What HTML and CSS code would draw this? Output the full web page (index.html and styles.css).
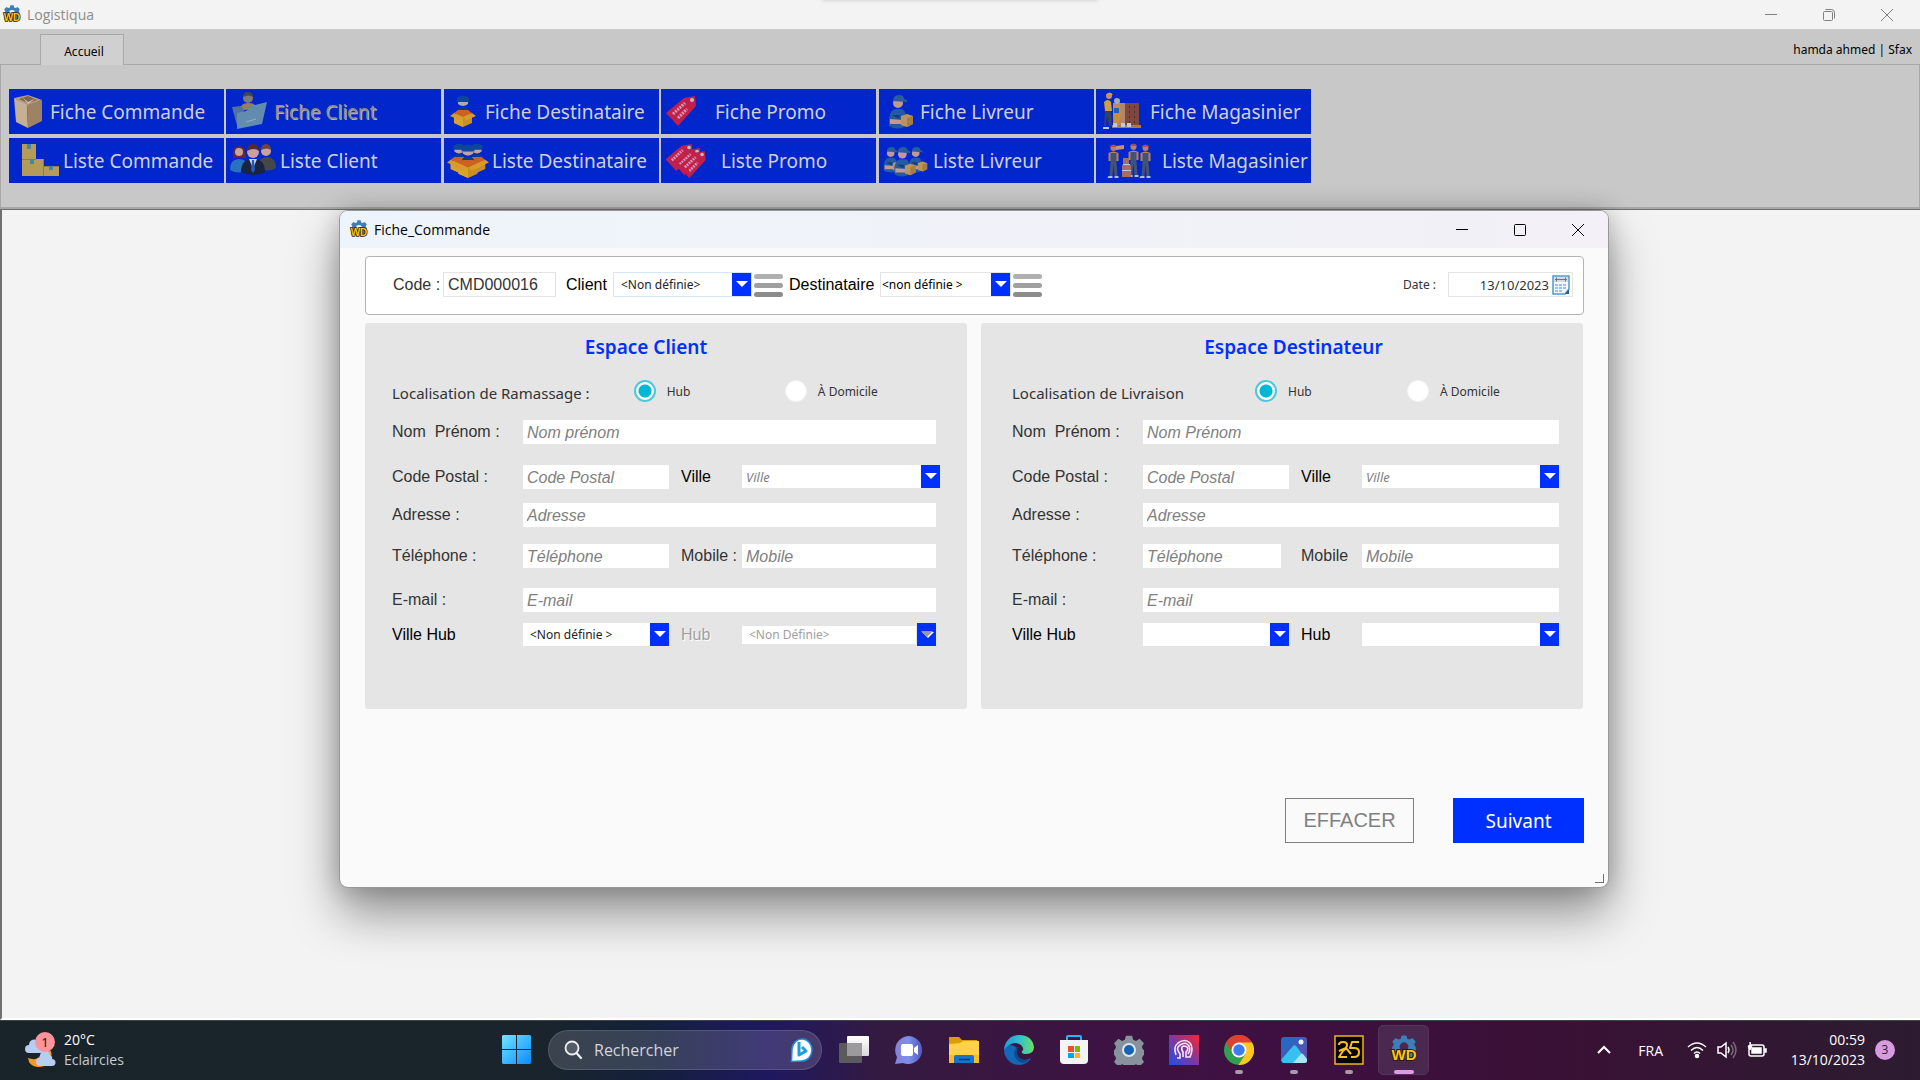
FILE: index.html
```html
<!DOCTYPE html>
<html lang="fr">
<head>
<meta charset="utf-8">
<title>Logistiqua</title>
<link rel="stylesheet" href="styles.css">
</head>
<body>
<svg class="defs" aria-hidden="true">
  <symbol id="gear" viewBox="-12 -12 24 24">
    <path fill-rule="evenodd" d="M-2.500-11.500h5l.8 3.200 2.300 1 2.900-1.700 3.500 3.500-1.700 2.900 1 2.300 3.200.8v3l-3.200.9-1 2.300 1.700 2.900-3.500 3.500-2.900-1.700-2.300 1-.8 3.200h-5l-.8-3.200-2.300-1-2.900 1.700-3.500-3.500 1.700-2.900-1-2.300-3.200-.9v-3l3.200-.8 1-2.300-1.700-2.900 3.500-3.500 2.900 1.700 2.300-1zM0-4.500a4.500 4.500 0 1 0 0 9 4.500 4.500 0 1 0 0-9z"/>
  </symbol>
  <symbol id="wd" viewBox="0 0 28 28">
    <use href="#gear" x="3" y="0" width="22" height="22" fill="#3f7fb8"/>
    <text x="14" y="23" text-anchor="middle" font-family="Liberation Sans" font-weight="700" font-size="14" fill="#ffc412" stroke="#2a1a10" stroke-width="2" paint-order="stroke">WD</text>
  </symbol>
  <symbol id="courier" viewBox="0 0 26 34">
    <path fill="#2660a0" d="M1 31q-1-15 6-17h7q4 2 4 8v9q-9 5-17 0z"/>
    <circle cx="10" cy="8" r="5" fill="#d9a58c"/>
    <path fill="#2f6494" d="M5 6q0-6 6-6 5 0 5 4l3 1v2z"/>
    <path fill="#17406e" d="M10 15v10M4 20h8l-1 4z"/>
    <path fill="#d9a58c" d="M2 24l13 1v4L2 29z"/>
    <path fill="#d0a050" d="M13 21l6-2 6 2v8l-6 3-6-2z"/>
    <path fill="#b8863a" d="M19 23l6-2v8l-6 3z"/>
  </symbol>
  <symbol id="receiver" viewBox="0 0 26 32">
    <path fill="#0e4c92" d="M7 3q6-5 12 0v4H7z"/>
    <path fill="#d8b0a0" d="M8 7h10v2q-5 4-10 0z"/>
    <path fill="#11407c" d="M7 17q0-5 6-5t6 5z"/>
    <path fill="#e09a18" d="M4 19h18v9l-9 4-9-4z"/>
    <path fill="#f0b020" d="M4 19l9 4v9l-9-4z"/>
    <path fill="#e06a10" d="M4 18l4-3h10l4 3-9 4z"/>
    <path fill="#f0a818" d="M4 18l9 4-4 3-9-4zM22 18l-9 4 4 3 9-4z"/>
  </symbol>
  <symbol id="tag" viewBox="0 0 34 32">
    <path fill="#d8203c" d="M1 18L19 3l11-2 1 10L13 31z"/>
    <circle cx="27" cy="5" r="2" fill="#c8d0c8"/>
    <path stroke="#e8a8b8" stroke-width="3" stroke-dasharray="2 1" fill="none" d="M8 19L20 8M13 23l9-9"/>
  </symbol>
  <symbol id="worker" viewBox="0 0 14 34">
    <circle cx="7" cy="4" r="3" fill="#c98a6a"/>
    <path fill="#c8503c" d="M3 3q4-5 8 0z"/>
    <path fill="#d08a50" d="M2 9q5-3 10 0v8H2z"/>
    <path fill="#4c5670" d="M4 9h6v9l1 14H8L7 20 6 32H3l1-14z"/>
    <path fill="#c8ccd4" d="M2 32h4v2H1zM8 32h4v2H8z"/>
  </symbol>
  <symbol id="burger" viewBox="0 0 29 24">
    <rect width="29" height="5" rx="2.500" y="1" fill="#b0b0b0"/>
    <rect width="29" height="5" rx="2.500" y="10" fill="#a0a0a0"/>
    <rect width="29" height="5" rx="2.500" y="19" fill="#8c8c8c"/>
  </symbol>
</svg>

<header class="app-title">
  <svg class="logo" viewBox="0 0 28 28"><use href="#wd"/></svg>
  <h1>Logistiqua</h1>
  <div class="notch"></div>
  <div class="win-controls">
    <button aria-label="Réduire"><svg viewBox="0 0 12 12"><path d="M0 5.500h12"/></svg></button>
    <button aria-label="Restaurer"><svg viewBox="0 0 12 12"><rect x=".5" y="2.500" width="9" height="9" rx="1"/><path d="M2.500.5h6a3 3 0 0 1 3 3v6"/></svg></button>
    <button aria-label="Fermer"><svg viewBox="0 0 12 12"><path d="M0 0l12 12M12 0L0 12"/></svg></button>
  </div>
</header>

<nav class="tabs">
  <button class="tab">Accueil</button>
  <span class="user">hamda ahmed | Sfax</span>
</nav>

<section class="ribbon">
  <div class="ribbon-grid">
    <button class="rb"><svg class="slot-s" viewBox="0 0 41 45"><path fill="#c8a878" d="M5 9l14-3 14 5-15 6z"/><path fill="#dcc090" d="M5 9l13 7 1 23L7 33z"/><path fill="#b08c58" d="M18 16l15-5v21l-14 7z"/><path fill="#8c6c40" d="M10 10l9-3 9 4-9 3z"/><path fill="#e4d0a8" d="M13 8l6 5 8-4-8 6z"/></svg><span>Fiche Commande</span></button>
    <button class="rb" disabled><svg class="slot-m" viewBox="0 0 48 45"><circle cx="22" cy="9" r="5" fill="#8c8078"/><path fill="#504840" d="M17 8q0-5 5-5t5 5q-4-3-10 0z"/><path fill="#a08a50" d="M14 22q0-8 8-8t8 5z"/><path fill="#587c98" d="M6 18l9-1 3 4-6 19z"/><path fill="#6c98ac" d="M11 24l9-2 5-5 16-4-5 22-25 5z"/><path fill="none" stroke="#a8c0cc" d="M20 33l10-3"/></svg><span>Fiche Client</span></button>
    <button class="rb"><svg class="slot-s" viewBox="0 0 41 45"><use href="#receiver" x="6" y="6" width="26" height="32"/></svg><span>Fiche Destinataire</span></button>
    <button class="rb"><svg class="slot-l" viewBox="0 0 54 45"><use href="#tag" x="4" y="6" width="34" height="32"/></svg><span>Fiche Promo</span></button>
    <button class="rb"><svg class="slot-s" viewBox="0 0 41 45"><use href="#courier" x="9" y="6" width="26" height="34"/></svg><span>Fiche Livreur</span></button>
    <button class="rb"><svg class="slot-l" viewBox="0 0 54 45"><path fill="#c8905c" d="M17 14h12v24H17z"/><path fill="#8c4c30" d="M29 14h14v24H29z"/><path stroke="#5c2c20" stroke-dasharray="2 3" d="M33.500 17v18M38.500 17v18"/><path fill="#c88030" d="M16 36h29v3H16z"/><circle cx="13" cy="7" r="3" fill="#d89870"/><path fill="#e0b030" d="M10 6q4-5 7 0zM8 13q4-4 7 0l1 9H9z"/><path fill="#38445c" d="M9 22h6l1 15h-3l-2-10-1 10H8z"/><circle cx="21" cy="12" r="3" fill="#b8b8c0"/><path fill="#e09830" d="M17 16h7l1 9-3 13h-4z"/><path fill="#2468a8" d="M18 19h5v5h-5z"/><path fill="#d8dce0" d="M7 38h6v2H7zM17 34h4v4h-4zM25 34h4v4h-4zM31 34h4v4h-4z"/></svg><span>Fiche Magasinier</span></button>

    <button class="rb"><svg class="slot-l" viewBox="0 0 54 45"><path fill="#c8a850" d="M13 6h14v15h7v7h16v10H13z"/><path stroke="#a88438" fill="none" d="M13 21.500h14M34.500 21v17M34 28.500h16"/><path fill="#4c90a8" d="M18 6h4v5h-4zM21 21h4v5h-4zM40 28h4v4h-4z"/></svg><span>Liste Commande</span></button>
    <button class="rb"><svg class="slot-l" viewBox="0 0 54 45"><path fill="#6c2c20" d="M7 20Q6 8 13 8t7 12z"/><circle cx="13" cy="14" r="4" fill="#e0b098"/><path fill="#2c7cc0" d="M4 32q0-11 9-11t8 11q-8 5-17 0z"/><circle cx="40" cy="13" r="5" fill="#e0b098"/><path fill="#7c4830" d="M35 12q0-6 5-6t5 6q-4-3-10 0z"/><path fill="#4c4c3c" d="M32 30q0-11 9-11t9 11q-8 5-18 0z"/><circle cx="27" cy="14" r="6" fill="#e0b098"/><path fill="#5c2c24" d="M21 13q0-7 6-7t6 7q-5-4-12 0z"/><path fill="#1c2434" d="M15 34q0-13 12-13t12 13q-10 6-24 0z"/><path fill="#e0e4e8" d="M23 21h8l-4 10z"/><path fill="#2c60b0" d="M26 22h2l1 10-2 3-2-3z"/></svg><span>Liste Client</span></button>
    <button class="rb"><svg class="slot-m" viewBox="0 0 48 45"><use href="#receiver" x="3" y="5" width="24" height="30"/><use href="#receiver" x="21" y="5" width="24" height="30"/><use href="#receiver" x="10" y="6" width="28" height="34"/></svg><span>Liste Destinataire</span></button>
    <button class="rb"><svg class="slot-xl" viewBox="0 0 60 45"><use href="#tag" x="3" y="5" width="32" height="29"/><use href="#tag" x="11" y="9" width="32" height="29"/><use href="#tag" x="16" y="12" width="32" height="29"/></svg><span>Liste Promo</span></button>
    <button class="rb"><svg class="slot-l" viewBox="0 0 54 45"><use href="#courier" x="4" y="9" width="20" height="26"/><use href="#courier" x="28" y="9" width="22" height="26"/><use href="#courier" x="14" y="9" width="24" height="30"/></svg><span>Liste Livreur</span></button>
    <button class="rb"><svg class="slot-xxl" viewBox="0 0 66 45"><use href="#worker" x="10" y="6" width="15" height="34"/><use href="#worker" x="30" y="5" width="15" height="34"/><use href="#worker" x="42" y="6" width="15" height="34"/><path fill="#d8a078" d="M20 8l8-1v4l-8 1z"/><path fill="#b87858" d="M27 20h6v7h2v12h-9V27h1z"/><path stroke="#d8dce0" d="M27 26.500h7M26 32.500h9"/></svg><span>Liste Magasinier</span></button>
  </div>
</section>

<main class="workspace">
  <section class="dialog" aria-labelledby="dlg-title">
    <header class="dlg-title">
      <svg class="logo" viewBox="0 0 28 28"><use href="#wd"/></svg>
      <h2 id="dlg-title">Fiche_Commande</h2>
      <div class="win-controls">
        <button aria-label="Réduire"><svg viewBox="0 0 12 12"><path d="M0 5.500h12"/></svg></button>
        <button aria-label="Agrandir"><svg viewBox="0 0 12 12"><rect x=".5" y=".5" width="11" height="11" rx="1"/></svg></button>
        <button aria-label="Fermer"><svg viewBox="0 0 12 12"><path d="M0 0l12 12M12 0L0 12"/></svg></button>
      </div>
    </header>
    <form class="dlg-body">
      <div class="order-bar">
        <label class="soft w-code" for="code">Code :</label>
        <input class="field boxed w-codefield" id="code" type="text" value="CMD000016">
        <label class="w-client" for="client">Client</label>
        <select class="combo boxed active" id="client"><option>&lt;Non définie&gt;</option></select>
        <button class="burger" type="button" aria-label="Liste des clients"><svg viewBox="0 0 29 24"><use href="#burger"/></svg></button>
        <label class="w-dest" for="dest">Destinataire</label>
        <select class="combo boxed tight" id="dest"><option>&lt;non définie &gt;</option></select>
        <button class="burger" type="button" aria-label="Liste des destinataires"><svg viewBox="0 0 29 24"><use href="#burger"/></svg></button>
        <label class="date-label" for="date">Date :</label>
        <div class="date-box">
          <input id="date" type="text" value="13/10/2023">
          <svg viewBox="0 0 18 20"><path fill="#f4f8fc" stroke="#4f98cc" stroke-width="1.500" d="M1 1h16v13l-4 5H1z"/><path fill="#d4dae0" d="M2 2h14v5H2z"/><path stroke="#707880" d="M3 4.500h12M4.500 2.500v4M13.500 2.500v4"/><path stroke="#9cc0f0" stroke-width="2" stroke-dasharray="3 1" d="M3 10h12M3 13h12M3 16h8"/><path fill="#2c5c94" d="M17 14v5h-4z"/></svg>
        </div>
      </div>

      <div class="panels">
        <fieldset class="panel panel-client">
          <h3>Espace Client</h3>
          <div class="place">
            <span class="place-label">Localisation de Ramassage :</span>
            <label><input type="radio" name="ramassage" checked>Hub</label>
            <label><input type="radio" name="ramassage">À Domicile</label>
          </div>
          <div class="form-grid">
            <label class="soft" for="c-nom">Nom  Prénom :</label>
            <input class="field wide" id="c-nom" type="text" placeholder="Nom prénom">
            <label class="soft" for="c-cp">Code Postal :</label>
            <input class="field" id="c-cp" type="text" placeholder="Code Postal">
            <label class="second" for="c-ville">Ville</label>
            <select class="combo hint stretch" id="c-ville"><option>Ville</option></select>
            <label class="soft" for="c-adr">Adresse :</label>
            <input class="field wide" id="c-adr" type="text" placeholder="Adresse">
            <label class="soft" for="c-tel">Téléphone :</label>
            <input class="field" id="c-tel" type="text" placeholder="Téléphone">
            <label class="soft second" for="c-mob">Mobile :</label>
            <input class="field" id="c-mob" type="text" placeholder="Mobile">
            <label class="soft" for="c-mail">E-mail :</label>
            <input class="field wide" id="c-mail" type="text" placeholder="E-mail">
            <label for="c-vhub">Ville Hub</label>
            <select class="combo" id="c-vhub"><option>&lt;Non définie &gt;</option></select>
            <label class="second off" for="c-hub">Hub</label>
            <select class="combo" id="c-hub" disabled><option>&lt;Non Définie&gt;</option></select>
          </div>
        </fieldset>

        <fieldset class="panel panel-dest">
          <h3>Espace Destinateur</h3>
          <div class="place">
            <span class="place-label">Localisation de Livraison</span>
            <label><input type="radio" name="livraison" checked>Hub</label>
            <label><input type="radio" name="livraison">À Domicile</label>
          </div>
          <div class="form-grid">
            <label class="soft" for="d-nom">Nom  Prénom :</label>
            <input class="field wide" id="d-nom" type="text" placeholder="Nom Prénom">
            <label class="soft" for="d-cp">Code Postal :</label>
            <input class="field" id="d-cp" type="text" placeholder="Code Postal">
            <label class="second" for="d-ville">Ville</label>
            <select class="combo hint" id="d-ville"><option>Ville</option></select>
            <label class="soft" for="d-adr">Adresse :</label>
            <input class="field wide" id="d-adr" type="text" placeholder="Adresse">
            <label class="soft" for="d-tel">Téléphone :</label>
            <input class="field short" id="d-tel" type="text" placeholder="Téléphone">
            <label class="soft second" for="d-mob">Mobile</label>
            <input class="field" id="d-mob" type="text" placeholder="Mobile">
            <label class="soft" for="d-mail">E-mail :</label>
            <input class="field wide" id="d-mail" type="text" placeholder="E-mail">
            <label for="d-vhub">Ville Hub</label>
            <select class="combo" id="d-vhub"><option></option></select>
            <label class="second" for="d-hub">Hub</label>
            <select class="combo" id="d-hub"><option></option></select>
          </div>
        </fieldset>
      </div>

      <div class="actions">
        <button class="btn-clear" type="reset">EFFACER</button>
        <button class="btn-next" type="button">Suivant</button>
      </div>
    </form>
    <span class="grip"></span>
  </section>
</main>

<footer class="taskbar">
  <div class="weather">
    <svg viewBox="0 0 36 40"><path fill="#f59a1c" d="M24 16q10 4 7 12-4 10-14 9-8-1-9-9 8 3 12-2 4-4 4-10z"/><path fill="#b8cdf2" d="M9 23a4 4 0 0 1 0-8 5 6 0 0 1 9-3q3 2 2 5a3 3 0 0 1 0 6z"/><path fill="#b8cdf2" d="M20 36a4 4 0 0 1 0-8 5 6 0 0 1 10-3q3 2 2 4a3 3 0 0 1 0 7z"/><circle cx="25" cy="12" r="10" fill="#fc949c"/><text x="25" y="17" text-anchor="middle" font-family="Noto Sans" font-size="13" fill="#201818">1</text></svg>
    <div><strong>20°C</strong><span>Eclaircies</span></div>
  </div>
  <div class="dock">
    <button class="app" aria-label="Démarrer"><svg viewBox="0 0 30 30"><defs><linearGradient id="win" x2="1" y2="1"><stop stop-color="#70e4ff"/><stop offset="1" stop-color="#0a8cff"/></linearGradient></defs><path fill="url(#win)" d="M1 0h13v14H0V1zM15 0h13l1 1v13H15zM0 15h14v14H1l-1-1zM15 15h14v13l-1 1H15z"/></svg></button>
    <label class="search">
      <svg viewBox="0 0 20 20"><circle cx="9" cy="8" r="6.500" fill="#ffffff22" stroke="#f0f0f4" stroke-width="1.800"/><path stroke="#f0f0f4" stroke-width="2.200" stroke-linecap="round" d="M13.500 13l4.500 5"/></svg>
      <input type="text" placeholder="Rechercher" aria-label="Rechercher">
      <svg class="bing" viewBox="0 0 24 26"><path fill="#fff" stroke="#1c8cdc" stroke-width="1.500" d="M1.500 24.500L2 12A10 11 0 1 1 12 24z"/><path fill="none" stroke="#1c9ce4" stroke-width="3" stroke-linejoin="round" d="M9 5v13l7-4-4-4"/></svg>
    </label>
    <button class="app" aria-label="Vue des tâches"><svg viewBox="0 0 30 30"><defs><linearGradient id="tv" y2="1" x2="0"><stop stop-color="#fff"/><stop offset="1" stop-color="#d8d8d8"/></linearGradient></defs><rect y="8" width="23" height="20" rx="1" fill="#5c5a5c"/><rect x="8" y="1" width="22" height="20" rx="1" fill="url(#tv)"/><path fill="#9c9a9c" d="M8 8h15v13H8z"/></svg></button>
    <button class="app" aria-label="Conversation"><svg viewBox="0 0 30 30"><defs><linearGradient id="ch" x2="1" y2="0"><stop stop-color="#8480dc"/><stop offset=".5" stop-color="#7c90e8"/><stop offset="1" stop-color="#5456c0"/></linearGradient></defs><path fill="url(#ch)" d="M15 1a14 14 0 1 1-6 27l-8 1 2-7A14 14 0 0 1 15 1z"/><rect x="7" y="9" width="12" height="12" rx="2" fill="#fff"/><path fill="#fff" d="M20 13l4-3v10l-4-3z"/></svg></button>
    <button class="app" aria-label="Explorateur"><svg viewBox="0 0 30 30"><path fill="#dc9c08" d="M0 2h10l3 3h15l1 4H0z"/><path fill="#ffd24a" d="M0 9l11-1 3-2h16v22H0z"/><path fill="#f8bc28" d="M0 20h30v8H0z"/><path fill="#1874c8" d="M5 28v-6q0-2 2-2h16q2 0 2 2v6z"/><path stroke="#0a3c70" stroke-width="1.500" d="M10 24.500h11"/></svg></button>
    <button class="app" aria-label="Edge"><svg viewBox="0 0 30 30"><defs><linearGradient id="ed" x2="1" y2="0"><stop stop-color="#1c9cd8"/><stop offset=".5" stop-color="#30c0d0"/><stop offset="1" stop-color="#6ce060"/></linearGradient></defs><path fill="#1468b8" d="M0 15a15 15 0 0 0 20 14q5-2 7-6-7 4-12 0-5-4-2-10Q6 6 0 15z"/><path fill="url(#ed)" d="M0 15A15 15 0 0 1 15 0q13 0 15 12 0 7-8 7-5 0-4-3 3-2-1-6Q9 4 0 15z"/><path fill="#0c4c94" d="M13 12q-6 7 0 13 6 6 12 0-8 1-11-4-2-4 0-9z"/></svg></button>
    <button class="app" aria-label="Microsoft Store"><svg viewBox="0 0 30 30"><path fill="none" stroke="#28b4f0" stroke-width="2" d="M8 6V2q0-1 1-1h12q1 0 1 1v4"/><path fill="#f4f4f4" d="M1 5h28v20q0 4-4 4H5q-4 0-4-4z"/><path fill="#f25022" d="M9 11h6v6H9z"/><path fill="#7fba00" d="M16 11h5v6h-5z"/><path fill="#00a4ef" d="M9 18h6v5H9z"/><path fill="#ffb900" d="M16 18h5v5h-5z"/></svg></button>
    <button class="app" aria-label="Paramètres"><svg viewBox="0 0 30 30"><use href="#gear" width="30" height="30" fill="#87929c"/><circle cx="15" cy="15" r="6" fill="#1464b4" stroke="#e0e6ec" stroke-width="2"/></svg></button>
    <button class="app" aria-label="Sécurité"><svg viewBox="0 0 30 30"><defs><linearGradient id="sc" x1="0" y1="1" x2="1" y2="0"><stop stop-color="#1c50e8"/><stop offset=".5" stop-color="#8038a0"/><stop offset="1" stop-color="#ff2428"/></linearGradient></defs><path fill="url(#sc)" d="M0 0h30v30H0z"/><path fill="none" stroke="#f8e8f8" stroke-width="1.600" d="M8 23h3v-4q-5-6 0-9 6-4 9 1 2 4-1 8M7 20q-3-8 2-12 7-5 12 0 4 5 0 14h-4v-5q3-3 1-5-3-2-5 0-1 2 1 5v5"/></svg></button>
    <button class="app run" aria-label="Chrome"><svg viewBox="0 0 30 30"><circle cx="15" cy="15" r="15" fill="#30a050"/><path fill="#e04030" d="M2 7.500A15 15 0 0 1 28 7.500L15 9 9 18z"/><path fill="#fcc820" d="M28 7.500A15 15 0 0 1 14.500 30L21.500 19 20 9l-5-1.500z"/><circle cx="15" cy="15" r="7.500" fill="#fff"/><circle cx="15" cy="15" r="5.700" fill="#3c7cf0"/></svg></button>
    <button class="app run" aria-label="Photos"><svg viewBox="0 0 30 30"><defs><linearGradient id="ph" x2="1" y2="1"><stop stop-color="#1470c8"/><stop offset="1" stop-color="#7048a8"/></linearGradient></defs><rect x="2" y="2" width="26" height="26" rx="3" fill="url(#ph)"/><path fill="#38c0f0" d="M2 25l12-14q2-2 4 1l5 7-8 9H4z"/><path fill="#a8e4f8" d="M14 28l8-9q1-1 2 0l4 5v3l-2 1z"/><circle cx="22" cy="7" r="2.500" fill="#f0f4f8"/></svg></button>
    <button class="app run" aria-label="WinDev 25"><svg viewBox="0 0 30 30"><path fill="#080404" stroke="#f0b418" stroke-width="1.500" d="M1 1h28v28H1z"/><path fill="none" stroke="#f8c020" stroke-width="2" stroke-linejoin="round" d="M5 10q0-3 4-3t4 3q0 3-4 6l-4 6h8M25 7h-7l-2 6h4q5 0 5 4 0 5-5 5h-3M5 16l7-3 5 6"/></svg></button>
    <button class="app open" aria-label="WinDev"><svg viewBox="0 0 28 28"><use href="#wd"/></svg></button>
  </div>
  <div class="tray">
    <svg class="chev" viewBox="0 0 16 10"><path d="M2 8l6-6 6 6"/></svg>
    <span class="lang">FRA</span>
    <div class="status">
      <svg viewBox="0 0 20 18"><path d="M1 6q9-8 18 0M4 9.500q6-6 12 0M7 12.500q3-3 6 0"/><circle cx="10" cy="15" r="1.500" fill="#fff"/></svg>
      <svg viewBox="0 0 20 18"><path d="M1 6h3l5-4v14l-5-4H1zM11 6q2 3 0 6"/><path opacity=".35" d="M14 4q4 5 0 10M16 1q6 8 0 16"/></svg>
      <svg viewBox="0 0 20 18"><rect x="2" y="4" width="15" height="11" rx="2"/><path fill="#fff" d="M5 7h9v5H5zM18 8h1v3h-1z"/><path fill="#fff" stroke-width="1" d="M3 1v4H1l2 4 2-4H4z"/></svg>
    </div>
    <time>00:59<br>13/10/2023</time>
    <span class="badge">3</span>
  </div>
</footer>
</body>
</html>
```
FILE: styles.css
```css
:root {
  --ui: "Open Sans", "Noto Sans", sans-serif;
  --treb: "Noto Sans", sans-serif;
  --arial: "Liberation Sans", Arial, sans-serif;
  --blue: #0030ff;
  --arrow: url("data:image/svg+xml,%3Csvg xmlns='http://www.w3.org/2000/svg' width='19' height='23'%3E%3Cpath fill='%230030ff' d='M0 0h19v23H0z'/%3E%3Cpath fill='white' d='M4 8h12l-6 6z'/%3E%3C/svg%3E");
  --arrow-off: url("data:image/svg+xml,%3Csvg xmlns='http://www.w3.org/2000/svg' width='19' height='23'%3E%3Cpath fill='%230030ff' d='M0 0h19v23H0z'/%3E%3Cpath fill='white' d='M5 9h12l-6 6z'/%3E%3Cpath fill='%23999' d='M4 8h12l-6 6z'/%3E%3C/svg%3E");
}

* { box-sizing: border-box; }

body {
  margin: 0;
  min-height: 100vh;
  display: flex;
  flex-direction: column;
  background: #f3f3f3;
  font-family: var(--ui);
  color: #000;
}

button, input, select { font: inherit; color: inherit; margin: 0; }
button { background: none; border: 0; padding: 0; }
h1, h2, h3 { margin: 0; font-weight: 400; }
svg { display: block; flex: none; }
.defs { position: absolute; width: 0; height: 0; }

/* Main window title */
.app-title {
  position: relative;
  display: flex;
  align-items: center;
  height: 29px;
  padding-left: 2px;
  background: #f3f3f3;
}
.logo { width: 20px; height: 20px; }
.app-title h1 { margin-left: 5px; font-size: 14px; color: #8c8c8c; }
.notch {
  position: absolute;
  top: -4px;
  left: 50%;
  width: 276px;
  height: 4px;
  margin-left: -138px;
  box-shadow: 0 0 4px #0003;
}
.win-controls { display: flex; margin-left: auto; padding-right: 4px; }
.win-controls button { display: grid; place-items: center; width: 58px; height: 29px; }
.win-controls svg { width: 12px; height: 12px; fill: none; stroke: #808080; overflow: visible; }

/* Tabs */
.tabs {
  display: flex;
  align-items: flex-end;
  height: 36px;
  padding: 0 8px 0 40px;
  background: #c8c8c8;
  border-bottom: 1px solid #a8a8a8;
  font-family: var(--treb);
  font-size: 12px;
}
.tab {
  width: 84px;
  height: 31px;
  margin-bottom: -1px;
  padding-left: 4px;
  padding-top: 2px;
  background: #d0d0d0;
  border: 1px solid #a8a8a8;
  border-bottom: 0;
}
.user { margin-left: auto; padding-bottom: 6px; }

/* Ribbon */
.ribbon {
  padding: 24px 8px;
  background: #c8c8c8;
  border: solid #a8a8a8;
  border-width: 0 1px 2px;
}
.ribbon-grid {
  display: grid;
  grid-template-columns: repeat(3, 215px 216px);
  gap: 4px 2px;
}
.rb {
  display: flex;
  align-items: center;
  width: 215px;
  height: 45px;
  background: #0026cc;
  color: #d0d0d4;
  font-family: var(--treb);
  font-size: 19px;
  white-space: nowrap;
}
.rb svg { height: 45px; opacity: .9; }
.rb:disabled { color: #8c8c8c; text-shadow: 1px 1px 0 #b4b4b4; }
.slot-s { width: 41px; }
.slot-m { width: 48px; }
.slot-l { width: 54px; }
.slot-xl { width: 60px; }
.slot-xxl { width: 66px; }

/* MDI area */
.workspace {
  position: relative;
  flex: 1;
  min-height: 809px;
  background: #f3f3f3;
  border: solid #707070;
  border-width: 1px 0 0 2px;
  border-bottom: 2px solid #fff;
}

/* Order window */
.dialog {
  position: absolute;
  top: 0;
  left: 337px;
  right: 311px;
  background: #fafafa;
  border: 1px solid #989898;
  border-radius: 9px;
  box-shadow: 0 26px 48px #0006, 0 0 24px #0003;
}
.dlg-title {
  display: flex;
  align-items: center;
  height: 37px;
  padding-left: 9px;
  background: linear-gradient(90deg, #eef4fb, #f3f0f7);
  border-radius: 8px 8px 0 0;
}
.dlg-title h2 { margin-left: 5px; font-size: 14px; }
.dlg-title .win-controls { padding-right: 1px; }
.dlg-title .win-controls svg { stroke: #000; }
.dlg-body { padding: 8px 24px 44px 25px; }

.order-bar {
  display: flex;
  align-items: center;
  height: 59px;
  padding: 0 10px 2px 27px;
  background: #fff;
  border: 1px solid #b4b4b4;
  border-radius: 4px;
  font-family: var(--arial);
  font-size: 16px;
}
.w-code { width: 50px; }
.w-client { width: 47px; }
.w-dest { width: 91px; }
.w-codefield { margin-right: 10px; }
.soft { color: #333; }

.field {
  width: 100%;
  height: 24px;
  padding: 2px 4px 0;
  border: 0;
  border-radius: 0;
  background: #fff;
  color: #333;
  font-family: var(--arial);
  font-size: 16px;
}
.order-bar .w-codefield { width: 113px; }
.field::placeholder { color: #808080; font-style: italic; opacity: 1; }
.field.boxed { height: 25px; border: 1px solid #e4e4e4; padding: 0 4px; }

.combo {
  appearance: none;
  width: 100%;
  height: 23px;
  padding: 0 22px 0 7px;
  border: 0;
  border-radius: 0;
  background: #fff var(--arrow) right center no-repeat;
  color: #222;
  font-family: var(--treb);
  font-size: 12px;
}
.combo.boxed { width: 139px; height: 25px; border: 1px solid #e4e4e4; }
.combo.tight { width: 131px; padding-left: 1px; color: #000; }
.combo.active { border-color: #d4e6f8; }
.combo.hint { padding-left: 4px; color: #808080; font-size: 13px; font-style: italic; }
.combo:disabled {
  opacity: 1;
  padding-left: 7px;
  color: #a0a0a0;
  background: var(--arrow-off) right center no-repeat, linear-gradient(#fff, #fff) left center / calc(100% - 20px) 18px no-repeat;
}
.burger { width: 29px; margin: 0 6px 0 2px; }
.burger svg { width: 29px; height: 24px; }
.date-label { margin-left: auto; padding-right: 12px; color: #333; font-family: var(--treb); font-size: 12px; }
.date-box {
  display: flex;
  align-items: center;
  width: 125px;
  height: 25px;
  padding-right: 2px;
  border: 1px solid #e4e4e4;
}
.date-box input {
  flex: 1;
  min-width: 0;
  padding: 0 3px 0 0;
  border: 0;
  background: none;
  color: #333;
  font-family: var(--treb);
  font-size: 13px;
  text-align: right;
}
.date-box svg { width: 18px; height: 20px; }

.panels {
  display: grid;
  grid-template-columns: 1fr 1fr;
  gap: 14px;
  margin: 8px 1px 0 0;
}
.panel {
  min-width: 0;
  min-height: 386px;
  margin: 0;
  padding: 12px 31px 0 27px;
  border: 0;
  border-radius: 3px;
  background: #e5e5e5;
  font-family: var(--arial);
  font-size: 16px;
}
.panel-dest { padding: 12px 24px 0 31px; }
.panel h3 {
  color: var(--blue);
  font-family: var(--treb);
  font-size: 19px;
  font-weight: 600;
  line-height: 24px;
  text-align: center;
}
.panel-client h3 { padding-right: 36px; }
.panel-dest h3 { padding-left: 16px; }

.place { display: flex; height: 61px; padding-top: 20px; font-family: var(--treb); }
.place-label { width: 243px; padding-top: 4px; color: #333; font-size: 15px; }
.place label {
  display: flex;
  align-items: center;
  gap: 11px;
  width: 152px;
  height: 24px;
  color: #333;
  font-size: 12px;
}
.place input {
  appearance: none;
  width: 22px;
  height: 22px;
  border: 1px solid #f4f4f4;
  border-radius: 50%;
  background: #fff;
}
.place input:checked {
  border: 2px solid #4cc8dc;
  background: radial-gradient(#00b8d4 0 6px, #fff 7px);
}

.form-grid {
  display: grid;
  grid-template-columns: 131px 146px 73px 1fr;
  grid-template-rows: 45px 38px 41px 44px 35px;
  align-items: start;
}
.form-grid label { line-height: 23px; white-space: pre; }
.form-grid .wide { grid-column: span 3; }
.form-grid .short { width: 138px; }
.form-grid .second { padding-left: 12px; }
.stretch { width: calc(100% + 4px); }
.off { color: #a0a0a0; text-shadow: 1px 1px 0 #fff; }

.actions { display: flex; justify-content: flex-end; gap: 39px; margin-top: 89px; }
.btn-clear {
  width: 129px;
  height: 45px;
  border: 1px solid #808080;
  color: #808080;
  font-family: var(--arial);
  font-size: 20px;
}
.btn-next {
  width: 131px;
  height: 45px;
  background: var(--blue);
  color: #fff;
  font-family: var(--treb);
  font-size: 19px;
}
.grip {
  position: absolute;
  right: 4px;
  bottom: 4px;
  width: 9px;
  height: 9px;
  border: solid #707070;
  border-width: 0 1px 1px 0;
}

/* Taskbar */
.taskbar {
  position: relative;
  display: grid;
  grid-template-columns: 1fr auto 1fr;
  align-items: center;
  height: 60px;
  box-shadow: inset 0 1px 0 #3c4448;
  background: linear-gradient(90deg, #19242a 0%, #19242c 28%, #14203c 34%, #1f1860 40%, #341a40 46%, #3c1442 56%, #3e1042 66%, #3a1036 80%, #2c1c30 100%);
  color: #fff;
  font-size: 14px;
}
.weather, .tray { display: flex; align-items: center; }
.weather { gap: 8px; padding-left: 20px; }
.weather svg { width: 36px; height: 40px; }
.weather strong, .weather span { display: block; font-weight: 400; line-height: 20px; }
.weather span { color: #c8ccd0; }
.dock { display: flex; align-items: center; }
.app { position: relative; display: grid; place-items: center; width: 55px; height: 50px; }
.app svg { width: 30px; height: 30px; }
.run::after, .open::after {
  content: "";
  position: absolute;
  bottom: 1px;
  left: 50%;
  width: 8px;
  height: 4px;
  margin-left: -4px;
  border-radius: 2px;
  background: #a898ac;
}
.open { width: 51px; margin: 0 2px; border: 1px solid #56345a; border-radius: 5px; background: #4a2850; }
.open::after { bottom: 0; width: 20px; margin-left: -10px; background: #dc9ce4; }
.search {
  display: flex;
  align-items: center;
  width: 274px;
  height: 40px;
  margin: 0 4px;
  padding: 0 7px 0 14px;
  border: 1px solid #ffffff20;
  border-radius: 20px;
  background: #ffffff26;
}
.search svg { width: 20px; height: 20px; }
.search .bing { width: 24px; height: 26px; }
.search input {
  flex: 1;
  min-width: 0;
  padding: 0 0 0 11px;
  border: 0;
  background: none;
  font-size: 16px;
}
.search input::placeholder { color: #d4d4dc; opacity: 1; }
.tray { justify-content: flex-end; padding-right: 25px; }
.chev { width: 16px; height: 10px; margin-right: 26px; fill: none; stroke: #fff; stroke-width: 2; }
.lang { margin-right: 24px; }
.status { display: flex; gap: 10px; margin-right: 10px; }
.status svg { width: 20px; height: 18px; fill: none; stroke: #fff; stroke-width: 1.500; }
.tray time { width: 88px; text-align: right; line-height: 20px; }
.badge {
  width: 20px;
  height: 20px;
  margin-left: 10px;
  border-radius: 50%;
  background: #d99be0;
  color: #301830;
  font-size: 12px;
  line-height: 20px;
  text-align: center;
}
```
